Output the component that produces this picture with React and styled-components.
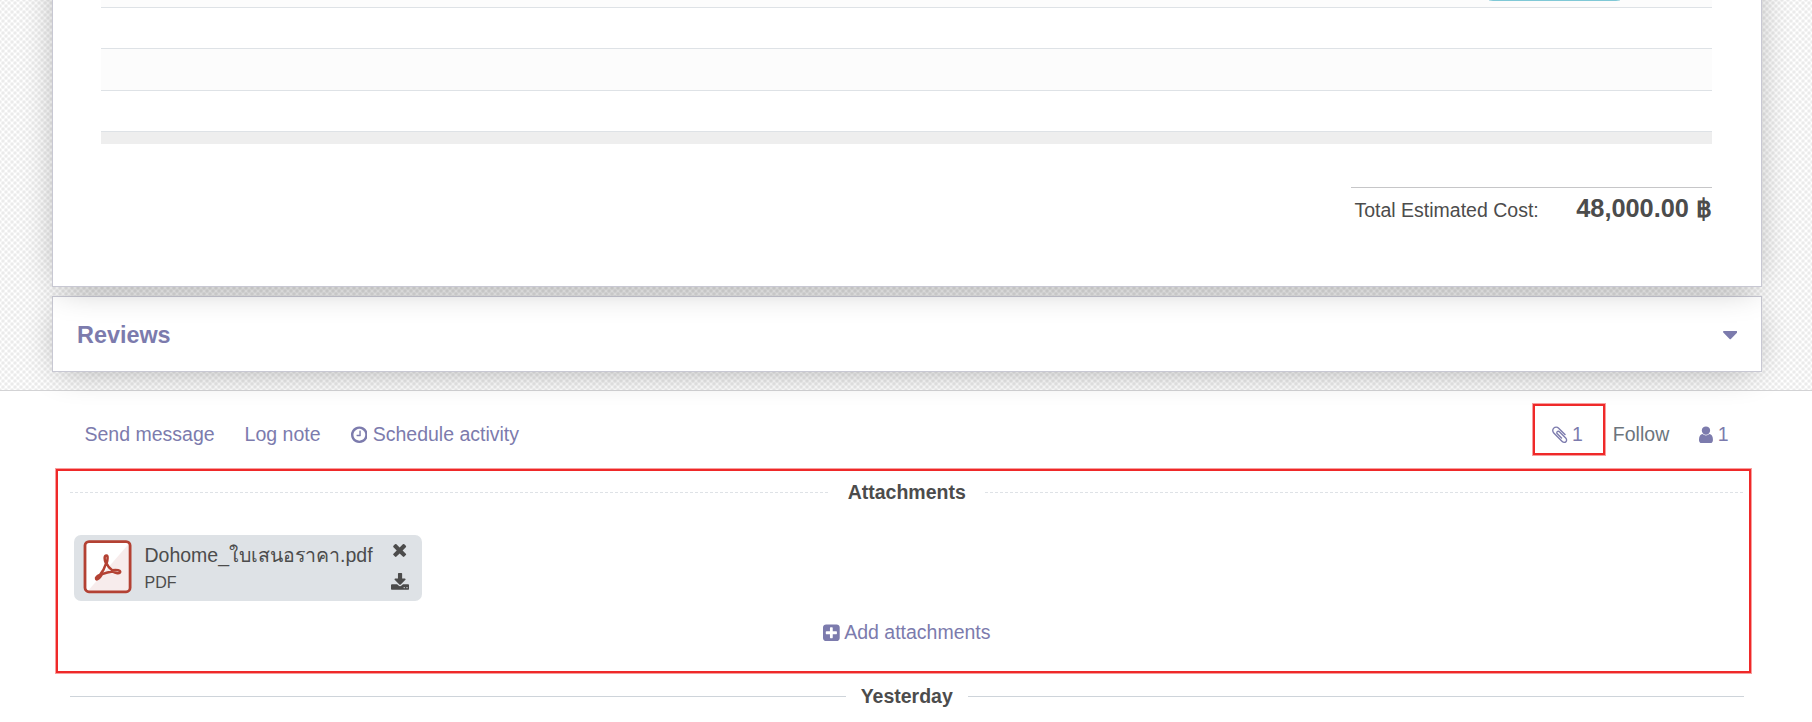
import React from "react";
import styled, { createGlobalStyle, css } from "styled-components";

const Global = createGlobalStyle`
  *, *::before, *::after { box-sizing: border-box; }
  html, body { margin: 0; background: #fff; overflow: hidden; }
  body {
    font-family: "Liberation Sans", Arial, "Noto Sans", sans-serif;
    font-size: 19.5px;
    line-height: 29px;
    color: #4c4c4c;
  }
`;

const Page = styled.div`
  position: relative;
  height: 722px;
  overflow: hidden;
`;

const FormArea = styled.section`
  position: relative;
  height: 391px;
  padding: 0 50px 0 52px;
  border-bottom: 1px solid #d3d3d5;
  background-color: #fff;
  background-image:
    radial-gradient(circle at 50% 50%, #ebebeb 1px, rgba(235, 235, 235, 0) 2.4px),
    radial-gradient(circle at 50% 50%, #ebebeb 1px, rgba(235, 235, 235, 0) 2.4px);
  background-size: 6px 6px;
  background-position: 0 0, 3px 3px;
  background-clip: padding-box;
`;

const cardShadow = "0 5px 34px -8px rgba(0, 0, 0, 0.33)";

const card = css`
  border: 1px solid #c8c8d3;
  background: #fff;
`;

const Sheet = styled.div`
  ${card}
  position: relative;
  z-index: 1;
  height: 287px;
  border-top: 0;
  padding: 0 49px 0 48px;
  display: flex;
  flex-direction: column;

  /* the sheet continues above the visible part, so its shadow does too */
  &::before {
    content: "";
    position: absolute;
    z-index: -1;
    inset: -60px -1px -1px;
    box-shadow: ${cardShadow};
  }
`;

const Line = styled.div`
  flex: none;
  height: ${(p) => p.$h}px;
  border-bottom: 1px solid #dee2e6;
  background: ${(p) => (p.$striped ? "#fcfcfc" : "#fff")};
  display: flex;
  justify-content: flex-end;
  align-items: flex-start;
`;

const BadgeEdge = styled.span`
  width: 131px;
  height: 1px;
  margin-right: 92px;
  background: linear-gradient(90deg, #c6e6ec, #7fc8d6 4px, #7fc8d6 127px, #c6e6ec);
`;

const TableFoot = styled.div`
  flex: none;
  height: 12px;
  background: #eee;
`;

const Totals = styled.div`
  align-self: flex-end;
  width: 361px;
  margin-top: 43px;
  padding-left: 3.5px;
  border-top: 1px solid #c6c6c8;
  display: flex;
  justify-content: space-between;
  align-items: baseline;
  white-space: nowrap;
`;

const Amount = styled.strong`
  font-size: 25.35px;
  line-height: 40px;
`;

const Reviews = styled.div`
  ${card}
  box-shadow: ${cardShadow};
  height: 76px;
  margin-top: 9px;
  padding: 1px 24px 0;
  display: flex;
  align-items: center;
  justify-content: space-between;
  color: #7c7bad;
  font-size: 23.4px;
  font-weight: bold;
`;

const ReviewsTitle = styled.span`
  padding-top: 2px;
`;

const Chatter = styled.section`
  padding: 0 68px 0 70px;
`;

const Topbar = styled.div`
  height: 77px;
  padding: 15px 15.5px 0 14.5px;
  display: flex;
  align-items: flex-start;
`;

const Action = styled.a`
  display: flex;
  align-items: center;
  height: 57px;
  gap: ${(p) => p.$gap || 5}px;
  margin-right: ${(p) => p.$mr || 0}px;
  color: ${(p) => (p.$muted ? "#6c757d" : "#7c7bad")};
  white-space: nowrap;
`;

const Spacer = styled.div`
  flex: 1;
`;

const Separator = styled.div`
  display: flex;
  align-items: center;
  gap: ${(p) => p.$gap}px;
  height: 48px;
  margin-top: ${(p) => p.$mt || 0}px;
  font-weight: bold;
`;

const SeparatorLabel = styled.span`
  margin-right: 0.6px;
`;

const DashRule = styled.span`
  flex: 1;
  height: 1px;
  background: repeating-linear-gradient(90deg, #dee2e6 0 3px, transparent 3px 5px);
`;

const SolidRule = styled.span`
  flex: 1;
  height: 1px;
  background: #ced4da;
`;

const File = styled.div`
  width: 348px;
  height: 66px;
  margin: 19px 0 0 4px;
  padding: 5px 12px 0 9px;
  border-radius: 7px;
  background: #dee2e6;
  display: flex;
`;

const FileText = styled.div`
  margin-left: 12.5px;
  flex: 1;
  white-space: nowrap;
`;

const FileName = styled.div`
  height: 31px;
  line-height: 30px;
`;

const FileType = styled.div`
  font-size: 16px;
  line-height: 24px;
`;

const FileTools = styled.div`
  width: 20px;
  display: flex;
  flex-direction: column;
  align-items: center;
  gap: 13px;
`;

const AddRow = styled.div`
  margin-top: 3px;
  display: flex;
  justify-content: center;
`;

const Highlight = styled.div`
  position: absolute;
  left: ${(p) => p.$x}px;
  top: ${(p) => p.$y}px;
  width: ${(p) => p.$w}px;
  height: ${(p) => p.$h}px;
  border: 2px solid #ef2929;
  box-shadow: 0 0 0 1px rgba(239, 41, 41, 0.45);
  pointer-events: none;
`;

const Glyph = styled.svg`
  flex: none;
  display: block;
  fill: currentColor;
  height: ${(p) => p.$size}px;
  width: ${(p) => (p.$size * p.$units) / 1792}px;
`;

const ICONS = {
  clock: [128, 1536, "M1024 544v448q0 14-9 23t-23 9h-320q-14 0-23-9t-9-23v-64q0-14 9-23t23-9h224v-352q0-14 9-23t23-9h64q14 0 23 9t9 23zm416 352q0-148-73-273t-198-198-273-73-273 73-198 198-73 273 73 273 198 198 273 73 273-73 198-198 73-273zm224 0q0 209-103 385.500t-279.500 279.500-385.500 103-385.500-103-279.500-279.500-103-385.500 103-385.500 279.500-279.500 385.500-103 385.500 103 279.500 279.500 103 385.500z"],
  user: [256, 1280, "M1536 1399q0 109-62.500 187t-150.500 78h-854q-88 0-150.500-78t-62.500-187q0-85 8.500-160.500t31.500-152 58.500-131 94-89 134.500-34.500q131 128 313 128t313-128q76 0 134.500 34.500t94 89 58.500 131 31.500 152 8.500 160.500zm-256-887q0 159-112.500 271.500t-271.500 112.500-271.500-112.500-112.500-271.500 112.500-271.500 271.500-112.500 271.500 112.500 112.500 271.500z"],
  clip: [192, 1408, "M1596 1385q0 117-79 196t-196 79q-135 0-235-100l-777-776q-113-115-113-271 0-159 110-270t269-111q158 0 273 113l605 606q10 10 10 22 0 16-30.500 46.500t-46.500 30.500q-13 0-23-10l-606-607q-79-77-181-77-106 0-179 75t-73 181q0 105 76 181l776 777q63 63 145 63 64 0 106-42t42-106q0-82-63-145l-581-581q-26-24-60-24-29 0-48 19t-19 48q0 32 25 59l410 410q10 10 10 22 0 16-31 47t-47 31q-12 0-22-10l-410-410q-63-61-63-149 0-82 57-139t139-57q88 0 149 63l581 581q100 98 100 235z"],
  plus: [128, 1536, "M1408 960v-128q0-26-19-45t-45-19h-320v-320q0-26-19-45t-45-19h-128q-26 0-45 19t-19 45v320h-320q-26 0-45 19t-19 45v128q0 26 19 45t45 19h320v320q0 26 19 45t45 19h128q26 0 45-19t19-45v-320h320q26 0 45-19t19-45zm256-544v960q0 119-84.500 203.500t-203.500 84.500h-960q-119 0-203.500-84.500t-84.500-203.500v-960q0-119 84.500-203.500t203.500-84.500h960q119 0 203.500 84.500t84.500 203.500z"],
  times: [192, 1408, "M1490 1322q0 40-28 68l-136 136q-28 28-68 28t-68-28l-294-294-294 294q-28 28-68 28t-68-28l-136-136q-28-28-28-68t28-68l294-294-294-294q-28-28-28-68t28-68l136-136q28-28 68-28t68 28l294 294 294-294q28-28 68-28t68 28l136 136q28 28 28 68t-28 68l-294 294 294 294q28 28 28 68z"],
  download: [64, 1664, "M1344 1344q0-26-19-45t-45-19-45 19-19 45 19 45 45 19 45-19 19-45zm256 0q0-26-19-45t-45-19-45 19-19 45 19 45 45 19 45-19 19-45zm128-224v320q0 40-28 68t-68 28h-1472q-40 0-68-28t-28-68v-320q0-40 28-68t68-28h465l135 136q58 56 136 56t136-56l136-136h464q40 0 68 28t28 68zm-325-569q17 41-14 70l-448 448q-18 19-45 19t-45-19l-448-448q-31-29-14-70 17-39 59-39h256v-448q0-26 19-45t45-19h256q26 0 45 19t19 45v448h256q42 0 59 39z"],
  caret: [384, 1024, "M1408 704q0 26-19 45l-448 448q-19 19-45 19t-45-19l-448-448q-19-19-19-45t19-45 45-19h896q26 0 45 19t19 45z"],
};

function Icon({ name, size = 19.5 }) {
  const [x, units, d] = ICONS[name];
  return (
    <Glyph $size={size} $units={units} viewBox={`${x} 0 ${units} 1792`} aria-hidden="true">
      <path d={d} />
    </Glyph>
  );
}

const PdfSvg = styled.svg`
  flex: none;
  display: block;
`;

function PdfIcon() {
  return (
    <PdfSvg width="49" height="54" viewBox="0 0 49 54" aria-hidden="true">
      <rect x="1.900" y="1.600" width="45.200" height="50.200" rx="4" fill="#fff" />
      <path d="M46.500 3V48q0 4-4 4H4z" fill="#f7ecec" />
      <rect x="2" y="1.600" width="45.100" height="50.200" rx="4" fill="none" stroke="#b34133" strokeWidth="2.800" />
      <path
        d="M24 15.400c-2.400 0-2.200 4.200-.4 8.200-1.400 4.600-4 9-6.200 11.400-2.600 1.200-4.400 2.700-3.700 3.900 1 1.300 3.600-.6 6-4.700 3-1.200 6.600-2.300 10.300-2.700 3.300 1.900 7.200 2.600 7.800.7.500-1.900-3.300-2.700-8-2-2.300-1.600-4.400-4-5.600-6.800 1.200-3.900 1.500-8-.2-8z"
        fill="none"
        stroke="#b34133"
        strokeWidth="2.500"
        strokeLinejoin="round"
        transform="translate(-0.600 0)"
      />
    </PdfSvg>
  );
}

export default function App() {
  return (
    <Page>
      <Global />
      <FormArea>
        <Sheet>
          <Line $h={8} $striped>
            <BadgeEdge />
          </Line>
          <Line $h={41} />
          <Line $h={42} $striped />
          <Line $h={41} />
          <TableFoot />
          <Totals>
            <span>Total Estimated Cost:</span>
            <Amount>48,000.00 ฿</Amount>
          </Totals>
        </Sheet>
        <Reviews>
          <ReviewsTitle>Reviews</ReviewsTitle>
          <Icon name="caret" size={25.35} />
        </Reviews>
      </FormArea>
      <Chatter>
        <Topbar>
          <Action $mr={30}>Send message</Action>
          <Action $mr={30}>Log note</Action>
          <Action $gap={5.5}><Icon name="clock" />Schedule activity</Action>
          <Spacer />
          <Action $gap={4.5} $mr={30}><Icon name="clip" />1</Action>
          <Action $muted $mr={30}>Follow</Action>
          <Action $gap={4.5}><Icon name="user" />1</Action>
        </Topbar>
        <Separator $gap={19}>
          <DashRule />
          <SeparatorLabel>Attachments</SeparatorLabel>
          <DashRule />
        </Separator>
        <File>
          <PdfIcon />
          <FileText>
            <FileName>Dohome_ใบเสนอราคา.pdf</FileName>
            <FileType>PDF</FileType>
          </FileText>
          <FileTools>
            <Icon name="times" />
            <Icon name="download" />
          </FileTools>
        </File>
        <AddRow>
          <Action $gap={4}><Icon name="plus" />Add attachments</Action>
        </AddRow>
        <Separator $gap={15} $mt={11}>
          <SolidRule />
          <SeparatorLabel>Yesterday</SeparatorLabel>
          <SolidRule />
        </Separator>
      </Chatter>
      <Highlight $x={1533} $y={404} $w={72} $h={51} />
      <Highlight $x={56} $y={469} $w={1695} $h={204} />
    </Page>
  );
}
